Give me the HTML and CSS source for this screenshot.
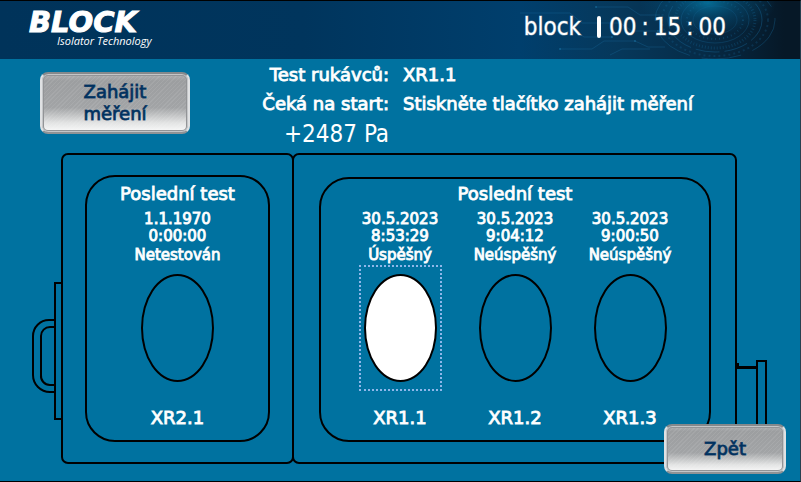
FILE: index.html
```html
<!DOCTYPE html>
<html lang="cs">
<head>
<meta charset="utf-8">
<title>Test rukávců</title>
<link rel="stylesheet" href="styles.css">
</head>
<body>
<div class="screen">
  <header class="topbar">
    <svg class="circuit" width="300" height="58" viewBox="0 0 300 58" fill="none" aria-hidden="true">
      <defs>
        <radialGradient id="glow"><stop offset="0" stop-color="#0580ad" stop-opacity=".75"/><stop offset=".5" stop-color="#04547d" stop-opacity=".45"/><stop offset="1" stop-color="#04547d" stop-opacity="0"/></radialGradient>
      </defs>
      <ellipse cx="208" cy="2" rx="68" ry="32" fill="url(#glow)"/>
      <g stroke="#17699c">
        <ellipse cx="215" cy="19" rx="22" ry="14" opacity=".25"/>
        <ellipse cx="215" cy="19" rx="28" ry="19" stroke-width="2" stroke-dasharray="1 3" opacity=".35"/>
        <ellipse cx="215" cy="19" rx="34" ry="23" opacity=".3"/>
        <ellipse cx="215" cy="19" rx="40" ry="28" stroke-width="3" stroke-dasharray="1 2" opacity=".3"/>
        <ellipse cx="215" cy="19" rx="47" ry="32" stroke-dasharray="24 5" opacity=".4"/>
        <ellipse cx="215" cy="19" rx="53" ry="36" stroke-width="2" stroke-dasharray="2 3" opacity=".25"/>
        <ellipse cx="215" cy="19" rx="60" ry="39" stroke-dasharray="40 12" opacity=".35"/>
      </g>
      <path d="M20 12H70L82 22H120L132 30H158M60 48H92L104 40H135L148 46H165M40 30H75L84 36H112M96 6H128L140 14H160M110 54L122 48H150" stroke="#1b71a5" opacity=".3"/>
      <g fill="#2387bb" opacity=".45"><circle cx="158" cy="30" r="1"/><circle cx="112" cy="36" r="1"/><circle cx="60" cy="48" r="1"/><circle cx="96" cy="6" r="1"/><circle cx="135" cy="40" r="1"/></g>
    </svg>
    <div class="logo">
      <span class="logo-name">BLOCK</span>
      <span class="logo-sub">Isolator Technology</span>
    </div>
    <div class="status">
      <span>block</span>
      <span class="divider"></span>
      <time class="clock"><span>00</span><span>:</span><span>15</span><span>:</span><span>00</span></time>
    </div>
  </header>

  <main class="content">
    <section class="summary">
      <button class="btn btn-start" type="button">Zahájit<br>měření</button>
      <div class="readout">
        <dl class="info">
          <dt>Test rukávců:</dt><dd>XR1.1</dd>
          <dt>Čeká na start:</dt><dd>Stiskněte tlačítko zahájit měření</dd>
        </dl>
        <p class="pressure">+2487 Pa</p>
      </div>
    </section>

    <section class="isolator">
      <svg class="handle" width="31" height="138" viewBox="0 0 31 138" fill="none" stroke="#000" stroke-width="2" aria-hidden="true">
        <path d="M31 1H23V137H31M23 38H17A16 16 0 0 0 1 54V93A17 17 0 0 0 18 110H23M23 45H18A9 9 0 0 0 9 54V93A9 9 0 0 0 18 103H23"/>
      </svg>
      <div class="cabinets">
        <div class="cabinet cabinet-small">
          <div class="window window-small">
            <h2>Poslední test</h2>
            <div class="gloves">
              <article class="glove">
                <p class="stamp">1.1.1970</p>
                <p class="stamp">0:00:00</p>
                <p class="result">Netestován</p>
                <button class="port" type="button" aria-label="XR2.1"></button>
                <h3>XR2.1</h3>
              </article>
            </div>
          </div>
        </div>
        <div class="cabinet cabinet-large">
          <div class="window">
            <h2>Poslední test</h2>
            <div class="gloves">
              <article class="glove">
                <p class="stamp">30.5.2023</p>
                <p class="stamp">8:53:29</p>
                <p class="result">Úspěšný</p>
                <button class="port port-selected" type="button" aria-label="XR1.1"></button>
                <h3>XR1.1</h3>
              </article>
              <article class="glove">
                <p class="stamp">30.5.2023</p>
                <p class="stamp">9:04:12</p>
                <p class="result">Neúspěšný</p>
                <button class="port" type="button" aria-label="XR1.2"></button>
                <h3>XR1.2</h3>
              </article>
              <article class="glove">
                <p class="stamp">30.5.2023</p>
                <p class="stamp">9:00:50</p>
                <p class="result">Neúspěšný</p>
                <button class="port" type="button" aria-label="XR1.3"></button>
                <h3>XR1.3</h3>
              </article>
            </div>
          </div>
        </div>
      </div>
      <svg class="shelf" width="32" height="104" viewBox="0 0 32 104" fill="none" stroke="#000" aria-hidden="true">
        <path d="M0 3H3V6H21V9H0Z" fill="#000" stroke="none"/>
        <path d="M21 104V1H30V104" stroke-width="2"/>
      </svg>
    </section>
    <button class="btn btn-back" type="button">Zpět</button>
  </main>
</div>
</body>
</html>
```
FILE: styles.css
```css
* {
  box-sizing: border-box;
  margin: 0;
}

body {
  font-family: "DejaVu Sans", sans-serif;
  color: #fff;
  background: #0072a0;
}

.screen {
  display: flex;
  flex-direction: column;
  min-height: 100vh;
  border-top: 1px solid #000;
  border-right: 1px solid #26404f;
  border-bottom: 1px solid #000;
}

.topbar {
  position: relative;
  display: flex;
  justify-content: space-between;
  height: 58px;
  padding: 0 74px 0 29px;
  background: linear-gradient(90deg, #00335a 0%, #00355d 38%, #003f6d 65%, #06385b 77%, #062b47 88%, #061827 98%);
}

.circuit {
  position: absolute;
  top: 0;
  right: 0;
}

.logo {
  display: flex;
  flex-direction: column;
  padding-top: 8px;
  font-style: italic;
}

.logo-name {
  font-size: 29px;
  line-height: 26px;
  font-weight: bold;
  -webkit-text-stroke: 1px #fff;
}

.logo-sub {
  margin-left: 28px;
  font-family: "Open Sans", sans-serif;
  font-size: 11px;
  line-height: 11px;
}

.status {
  position: relative;
  display: flex;
  align-items: center;
  gap: 16px;
  height: 52px;
  font-family: "DejaVu Sans Condensed", "DejaVu Sans", sans-serif;
  font-stretch: condensed;
  font-size: 24px;
  -webkit-text-stroke: 1px rgba(255, 255, 255, 0.4);
}

.divider {
  width: 4px;
  height: 22px;
  border-radius: 2px;
  background: #fff;
}

.clock {
  display: flex;
  gap: 5px;
  margin-left: -8px;
}

.content {
  position: relative;
  flex: 1;
}

.summary {
  display: flex;
  height: 94px;
  padding: 0 40px;
}

.btn {
  border: 2px solid;
  border-color: #85898c #dfe1e3 #909396 #dfe1e3;
  border-radius: 8px;
  background:
    repeating-linear-gradient(135deg, rgba(255, 255, 255, 0.08) 0 1px, transparent 1px 3px),
    linear-gradient(#b0b1b2, #9c9ea0 12%, #a2a4a6 58%, #e2e3e3 84%, #fafafa);
  box-shadow: inset 0 0 0 1px #c4c6c8, inset 0 0 0 2px #929497;
  color: #00315f;
  font: 18px/22px "DejaVu Sans", sans-serif;
  -webkit-text-stroke: 1px rgba(0, 49, 95, 0.8);
}

.btn-start {
  width: 150px;
  height: 62px;
  margin-top: 13px;
}

.btn-back {
  position: absolute;
  right: 14px;
  bottom: 7px;
  width: 122px;
  height: 50px;
}

.readout {
  margin-left: 58px;
}

.info {
  display: grid;
  grid-template-columns: 141px auto;
  column-gap: 14px;
  padding-top: 1px;
  font-size: 18px;
  line-height: 29px;
  -webkit-text-stroke: 1px rgba(255, 255, 255, 0.9);
}

.info dt {
  text-align: right;
}

.info dd {
  margin: 0;
}

.pressure {
  margin-left: 36px;
  font-family: "DejaVu Sans Condensed", "DejaVu Sans", sans-serif;
  font-stretch: condensed;
  font-size: 24px;
  line-height: 32px;
}

.isolator {
  display: flex;
  padding: 0 32px;
}

.handle {
  flex: none;
  margin: 129px -2px 0 0;
}

.cabinets {
  display: grid;
  grid-template-columns: 231fr 445fr;
  flex: 1;
}

.cabinet {
  height: 311px;
  border: 2px solid #000;
  border-radius: 7px;
}

.cabinet-small {
  margin-right: -2px;
  padding: 20px 22px;
}

.cabinet-large {
  padding: 22px 24px 20px 25px;
}

.shelf {
  flex: none;
  margin: 207px 0 0 -1px;
}

.window {
  height: 265px;
  padding-top: 4px;
  border: 2px solid #000;
  border-radius: 30px;
  text-align: center;
  -webkit-text-stroke: 1px rgba(255, 255, 255, 0.9);
}

.window-small {
  height: 267px;
  padding-top: 6px;
}

h2,
h3 {
  font-size: 18px;
  line-height: 22px;
  font-weight: normal;
}

.gloves {
  display: flex;
  justify-content: center;
}

.glove {
  display: flex;
  flex-direction: column;
  align-items: center;
  width: 115px;
  padding-top: 6px;
}

.stamp,
.result {
  font-size: 15px;
  line-height: 17px;
}

.result {
  line-height: 20px;
}

.port {
  position: relative;
  width: 73px;
  height: 108px;
  margin: 9px 0 25px;
  padding: 0;
  border: 2px solid #000;
  border-radius: 50%;
  background: transparent;
}

.port-selected {
  background: #fff;
}

.port-selected::after {
  content: "";
  position: absolute;
  inset: -11px -7px;
  border: 2px dotted #8fb7ea;
}
```
